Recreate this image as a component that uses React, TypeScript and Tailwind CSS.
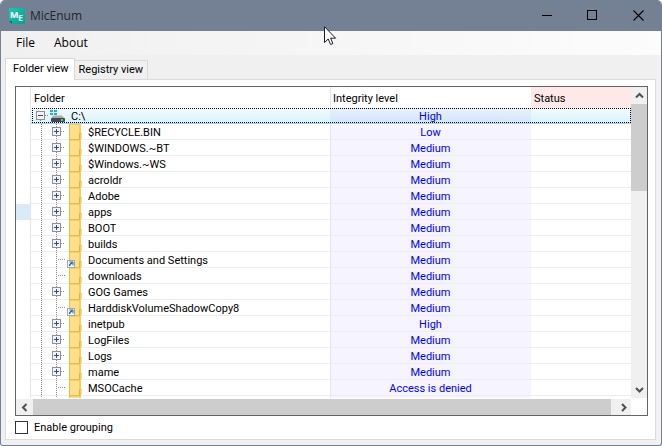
import { useState } from 'react';

type NodeKind = 'branch' | 'leaf' | 'link';

interface FolderRow {
  name: string;
  level: string;
  kind: NodeKind;
  marked?: boolean;
}

const rows: FolderRow[] = [
  { name: '$RECYCLE.BIN', level: 'Low', kind: 'branch' },
  { name: '$WINDOWS.~BT', level: 'Medium', kind: 'branch' },
  { name: '$Windows.~WS', level: 'Medium', kind: 'branch' },
  { name: 'acroldr', level: 'Medium', kind: 'branch' },
  { name: 'Adobe', level: 'Medium', kind: 'branch' },
  { name: 'apps', level: 'Medium', kind: 'branch', marked: true },
  { name: 'BOOT', level: 'Medium', kind: 'branch' },
  { name: 'builds', level: 'Medium', kind: 'branch' },
  { name: 'Documents and Settings', level: 'Medium', kind: 'link' },
  { name: 'downloads', level: 'Medium', kind: 'leaf' },
  { name: 'GOG Games', level: 'Medium', kind: 'branch' },
  { name: 'HarddiskVolumeShadowCopy8', level: 'Medium', kind: 'link' },
  { name: 'inetpub', level: 'High', kind: 'branch' },
  { name: 'LogFiles', level: 'Medium', kind: 'branch' },
  { name: 'Logs', level: 'Medium', kind: 'branch' },
  { name: 'mame', level: 'Medium', kind: 'branch' },
  { name: 'MSOCache', level: 'Access is denied', kind: 'leaf' },
  { name: '', level: '', kind: 'leaf' },
];

const LINE = '#8a8a8a';

function AppLogo() {
  return (
    <svg width="16" height="16" viewBox="0 0 16 16" aria-hidden="true">
      <defs>
        <linearGradient id="logo" x1="0" y1="0" x2="1" y2="1">
          <stop offset="0" stopColor="#1fc7b4" />
          <stop offset="1" stopColor="#0a9d8e" />
        </linearGradient>
      </defs>
      <path d="M0 0h16v16H3l-3-3z" fill="url(#logo)" />
      <path d="M0 13l3 3V13z" fill="#0b6f68" />
      <text x="1" y="10" fontSize="9" fontWeight="700" fill="#fff" fontFamily="Open Sans, sans-serif">M</text>
      <text x="9" y="13" fontSize="9" fontWeight="700" fill="#e6fffb" fontFamily="Open Sans, sans-serif">E</text>
    </svg>
  );
}

function Expander({ open }: { open?: boolean }) {
  return (
    <svg width="14" height="16" viewBox="0 0 14 16" shapeRendering="crispEdges" aria-hidden="true">
      <path d="M10 7.5h4" stroke={LINE} strokeDasharray="1 1" />
      <path d={open ? 'M5.5 12v4' : 'M5.5 12v4M5.5 0v3'} stroke={LINE} strokeDasharray="1 1" />
      <rect x="1.5" y="3.5" width="8" height="8" fill="#f4f4f6" stroke="#8f8f94" />
      <path d="M3 7.5h5" stroke="#2f4a94" />
      {!open && <path d="M5.5 5v5" stroke="#2f4a94" />}
    </svg>
  );
}

function LeafLines() {
  return (
    <svg className="shrink-0" width="14" height="16" viewBox="0 0 14 16" shapeRendering="crispEdges" aria-hidden="true">
      <path d="M5.5 0v16M7 7.5h7" stroke={LINE} strokeDasharray="1 1" />
    </svg>
  );
}

function FolderIcon({ link }: { link?: boolean }) {
  return (
    <svg className="shrink-0" width="19" height="16" viewBox="0 0 19 16" aria-hidden="true">
      <rect x="4" y="0" width="12" height="16" fill="#ffe08a" />
      <path d="M4.5 0v15.5h10.5V0" fill="none" stroke="#e9bd45" />
      <path d="M5 .5h10" stroke="#f3cf65" />
      <path d="M14.5 9.5h1.5v5l-1.5 1z" fill="#ffe79e" stroke="#e2b437" />
      {link && (
        <g>
          <rect x="2.5" y="8.5" width="7" height="7" fill="#fff" stroke="#9aa5b5" />
          <path d="M4.5 10H8v3.500" fill="none" stroke="#2465b0" />
          <path d="M4.5 14c0-2 1-2.500 3-3.500" fill="none" stroke="#2465b0" strokeWidth="1.5" />
        </g>
      )}
    </svg>
  );
}

function DriveIcon() {
  return (
    <svg className="shrink-0" width="18" height="16" viewBox="0 0 18 16" aria-hidden="true">
      <path d="M1 2h3v2H1zM5 2h3v2H5zM1 5h3v2H1zM5 5h3v2H5z" fill="#17b1ec" />
      <path d="M4 7.5h9l3 3.5H2z" fill="#a9adb0" />
      <rect x="2" y="10" width="14" height="4" rx="1" fill="#45494c" />
      <rect x="12" y="11" width="2" height="2" fill="#3ce06a" />
    </svg>
  );
}

function Chevron({ d }: { d: string }) {
  return (
    <svg width="9" height="9" viewBox="0 0 9 9" aria-hidden="true">
      <path d={d} fill="none" stroke="#505050" strokeWidth="2" />
    </svg>
  );
}

function TitleBar() {
  return (
    <header className="flex h-[31px] shrink-0 items-center bg-[#748194] pl-2 font-['Open_Sans',sans-serif]">
      <AppLogo />
      <h1 className="flex-1 pl-[5px] text-[12px] leading-4 text-[#22262c]">MicEnum</h1>
      <button aria-label="Minimize" className="flex h-full w-[45px] items-center justify-center">
        <svg width="11" height="11" viewBox="0 0 11 11" shapeRendering="crispEdges">
          <path d="M0 5.5h10" stroke="#000" />
        </svg>
      </button>
      <button aria-label="Maximize" className="flex h-full w-[45px] items-center justify-center">
        <svg width="11" height="11" viewBox="0 0 11 11" shapeRendering="crispEdges">
          <rect x=".5" y=".5" width="9" height="9" fill="none" stroke="#000" />
        </svg>
      </button>
      <button aria-label="Close" className="flex h-full w-[46px] items-center justify-center">
        <svg width="11" height="11" viewBox="0 0 11 11">
          <path d="M.5.5l10 10M10.5.5l-10 10" stroke="#000" strokeWidth="1.1" />
        </svg>
      </button>
    </header>
  );
}

function FolderTable() {
  return (
    <table className="w-full table-fixed border-collapse leading-[14px]">
      <colgroup>
        <col className="w-[15px]" />
        <col />
        <col className="w-[201px]" />
        <col className="w-[100px]" />
      </colgroup>
      <thead>
        <tr className="h-[21px] text-left">
          <td className="shadow-[inset_-1px_0_0_#e5e5e5]" />
          <th className="p-0 pt-[2px] pl-[3px] font-normal">Folder</th>
          <th className="p-0 pt-[2px] pl-[3px] font-normal shadow-[inset_1px_0_0_#e5e5e5]">Integrity level</th>
          <th className="bg-[#ffe9e8] p-0 pt-[2px] pl-[3px] font-normal">Status</th>
        </tr>
      </thead>
      <tbody>
        <tr className="relative h-4">
          <td className="p-0 shadow-[inset_-1px_0_0_#e5e5e5]">
            {/* Focus rectangle of the selected row */}
            <div className="pointer-events-none absolute top-0 right-0 bottom-px left-4 border border-dotted border-black" />
          </td>
          <td className="bg-linear-to-b from-[#f3fbff] to-[#d8f1fb] p-0 shadow-[inset_0_-1px_0_#9bd7f0,0_-1px_0_#9bd7f0]">
            <div className="flex h-4 items-center pl-1">
              <button aria-label="Collapse C:\" className="h-4 shrink-0">
                <Expander open />
              </button>
              <DriveIcon />
              <span className="pt-[2px] pl-1">C:\</span>
            </div>
          </td>
          <td className="bg-linear-to-b from-[#eaf1fd] to-[#cfe6f8] p-0 pt-[2px] text-center text-[#0000ff] shadow-[inset_0_-1px_0_#9bd7f0,0_-1px_0_#9bd7f0]">
            High
          </td>
          <td className="bg-linear-to-b from-[#f3fbff] to-[#d8f1fb] p-0 shadow-[inset_0_-1px_0_#9bd7f0,0_-1px_0_#9bd7f0]" />
        </tr>
        {rows.map((row, i) => (
          <tr key={i} className="h-4">
            <td className={`p-0 shadow-[inset_-1px_0_0_#e5e5e5] ${row.marked ? 'bg-[#d9ebf9]' : ''}`} />
            <td className="p-0 shadow-[inset_0_-1px_0_#ededed]">
              <div className="flex h-4 items-center">
                <svg className="shrink-0" width="20" height="16" viewBox="0 0 20 16" shapeRendering="crispEdges" aria-hidden="true">
                  <path d="M10.5 0v16" stroke={LINE} strokeDasharray="1 1" />
                </svg>
                {row.kind === 'branch' ? (
                  <button aria-label={`Expand ${row.name}`} className="h-4 shrink-0">
                    <Expander />
                  </button>
                ) : (
                  <LeafLines />
                )}
                <FolderIcon link={row.kind === 'link'} />
                <span className="truncate pt-[2px] pl-1">{row.name}</span>
              </div>
            </td>
            <td className="bg-[#f5f4ff] p-0 pt-[2px] text-center text-[#0000ff] shadow-[inset_0_-1px_0_#ececf4,inset_1px_0_0_#e6e6f0]">
              {row.level}
            </td>
            <td className="p-0 shadow-[inset_0_-1px_0_#ededed]" />
          </tr>
        ))}
      </tbody>
    </table>
  );
}

export default function App() {
  const [grouping, setGrouping] = useState(false);

  return (
    <div className="relative flex h-screen flex-col overflow-hidden rounded-t-[5px] rounded-b-[3px] border-x border-b border-[#748194] bg-[#f0f0f0] font-[Roboto,sans-serif] text-[11px] leading-4 text-black">
      <TitleBar />

      {/* Menu */}
      <nav className="flex h-6 shrink-0 items-center gap-[19px] bg-linear-to-r from-[#f0f0f0] to-[#fcfcfc] pl-[15px] font-['Open_Sans',sans-serif] text-[12px]">
        <button>File</button>
        <button>About</button>
      </nav>

      {/* Tabs */}
      <div role="tablist" className="flex shrink-0 items-end pt-[3px] pl-1">
        <button
          role="tab"
          aria-selected="true"
          className="relative z-10 -mb-px h-[22px] border border-b-0 border-[#d9d9d9] bg-white pr-[5px] pb-[2px] pl-[7px]"
        >
          Folder view
        </button>
        <button role="tab" aria-selected="false" className="h-[19px] border border-b-0 border-l-0 border-[#d9d9d9] px-1">
          Registry view
        </button>
      </div>

      {/* Tab page */}
      <main className="mr-[5px] mb-[5px] ml-1 flex min-h-0 flex-1 flex-col border border-[#dcdcdc] bg-white pt-[6px] pr-[7px] pb-[5px] pl-[9px]">
        <div className="flex min-h-0 flex-1 flex-col border border-[#646464]">
          <div className="flex min-h-0 flex-1">
            <div className="min-w-0 flex-1 overflow-hidden">
              <FolderTable />
            </div>
            <div className="flex w-4 shrink-0 flex-col bg-[#f0f0f0]">
              <button aria-label="Scroll up" className="flex h-[17px] items-center justify-center">
                <Chevron d="M1 6.5l3.5-3.5L8 6.5" />
              </button>
              <div className="h-[87px] bg-[#cdcdcd]" />
              <div className="flex-1" />
              <button aria-label="Scroll down" className="flex h-[17px] items-center justify-center">
                <Chevron d="M1 3l3.5 3.5L8 3" />
              </button>
            </div>
          </div>
          <div className="flex h-[17px] shrink-0 border-t border-white pr-4">
            <button aria-label="Scroll left" className="flex w-[17px] items-center justify-center bg-[#f0f0f0]">
              <Chevron d="M6.5 1L3 4.5L6.5 8" />
            </button>
            <div className="flex-1 bg-[#cdcdcd]" />
            <button aria-label="Scroll right" className="flex w-5 items-center justify-center bg-[#f0f0f0] pl-1">
              <Chevron d="M3 1l3.5 3.5L3 8" />
            </button>
          </div>
        </div>

        <label className="mt-[5px] flex h-[13px] shrink-0 items-center gap-[6px]">
          <input
            type="checkbox"
            checked={grouping}
            onChange={(e) => setGrouping(e.target.checked)}
            className="size-[13px] appearance-none border border-[#333] bg-white checked:bg-[#333]"
          />
          Enable grouping
        </label>
      </main>

      {/* Mouse pointer */}
      <svg className="pointer-events-none absolute top-[26px] left-[323px]" width="13" height="20" viewBox="0 0 13 20" aria-hidden="true">
        <path d="M.5.7v15.8l3.7-3.5 2.4 5.5 2.3-1-2.3-5.3h5z" fill="#fff" stroke="#1c1c28" />
      </svg>
    </div>
  );
}
